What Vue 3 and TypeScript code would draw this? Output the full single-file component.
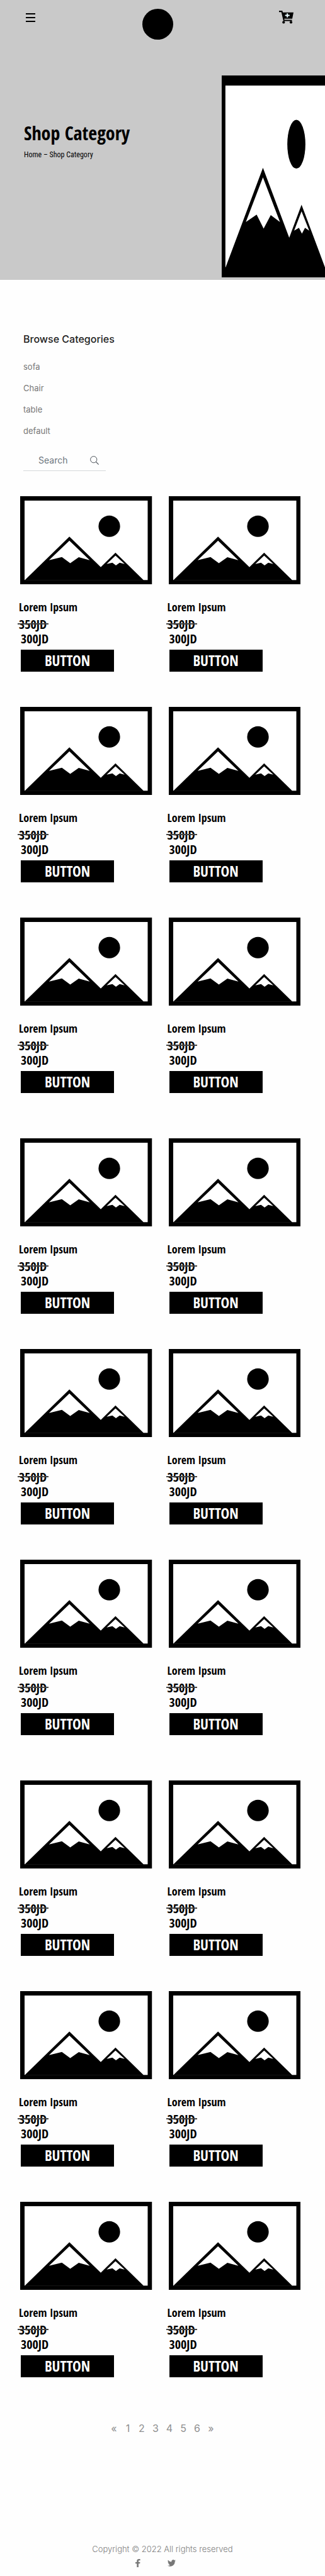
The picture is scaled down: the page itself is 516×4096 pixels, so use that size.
<script setup lang="ts">
import { ref } from 'vue'

interface Product {
  id: number
  name: string
  oldPrice: string
  price: string
}

const categories: string[] = ['sofa', 'Chair', 'table', 'default']
const pages: string[] = ['«', '1', '2', '3', '4', '5', '6', '»']
const query = ref('')

const groups: Product[][] = [0, 1, 2].map((g) =>
  Array.from({ length: 6 }, (_, i) => ({
    id: g * 6 + i,
    name: 'Lorem Ipsum',
    oldPrice: '350JD',
    price: '300JD',
  })),
)
</script>

<template>
  <div class="page">
    <svg class="defs" aria-hidden="true">
      <symbol id="landscape" viewBox="0 0 209 140" preserveAspectRatio="none">
        <rect width="209" height="140" fill="#000" />
        <rect x="7" y="7" width="195" height="126" fill="#fff" />
        <ellipse cx="141.2" cy="47.7" rx="17.1" ry="16.9" fill="#000" />
        <path
          d="M7 133.5 78 64l49.7 48.5L151 89.6l44.8 43.9z"
          fill="#000"
        />
        <path
          d="M78 70.6l32.2 31-17.4-4.8-13.5 9.4-13.2-9.7-20.4 5.1z"
          fill="#fff"
        />
        <path
          d="M151 94.2l14.5 13.4-7.9-2-5.9 4.1-5.6-4.1-9.1 2z"
          fill="#fff"
        />
      </symbol>
    </svg>

    <header class="hero">
      <nav class="bar">
        <button class="icon-btn menu" type="button" aria-label="Menu">
          <svg viewBox="0 0 15 14" width="15" height="14">
            <path d="M0 1h15M0 7h15M0 13h15" stroke="#000" stroke-width="2" />
          </svg>
        </button>
        <a class="logo" href="#" aria-label="Home"></a>
        <button class="icon-btn cart" type="button" aria-label="Cart">
          <svg viewBox="0 0 23 21" width="23" height="21">
            <path
              d="M0 0h5.3l.7 2.7h17l-2 10H8.3l.3 1.9h11.9v2H7L3.7 2.2H0z"
              fill="#000"
            />
            <circle cx="7.3" cy="18.4" r="2.1" fill="#000" />
            <circle cx="19" cy="18.4" r="2.1" fill="#000" />
            <path d="M13.2 4.2v6.6M9.6 7.5h7.2" stroke="#e9fbff" stroke-width="2" />
          </svg>
        </button>
      </nav>
      <div class="banner">
        <div class="intro">
          <h1>Shop Category</h1>
          <p>Home – Shop Category</p>
        </div>
        <svg class="banner-pic" role="img" aria-label="Banner">
          <use href="#landscape" width="100%" height="100%" />
        </svg>
      </div>
    </header>

    <aside class="browse">
      <h2>Browse Categories</h2>
      <ul>
        <li v-for="c in categories" :key="c"><a href="#">{{ c }}</a></li>
      </ul>
      <form class="search" @submit.prevent>
        <input v-model="query" type="text" placeholder="Search" aria-label="Search" />
        <button class="icon-btn" type="submit" aria-label="Submit search">
          <svg viewBox="0 0 14 14" width="14" height="14">
            <circle cx="5.7" cy="5.7" r="5.1" fill="none" stroke="#495057" />
            <path d="M9.4 9.4l4.2 4.2" stroke="#495057" stroke-width="1.2" />
          </svg>
        </button>
      </form>
    </aside>

    <main class="groups">
      <section v-for="(group, g) in groups" :key="g" class="grid">
        <article v-for="p in group" :key="p.id" class="card">
          <svg class="pic" viewBox="0 0 209 140" role="img" :aria-label="p.name">
            <use href="#landscape" width="209" height="140" />
          </svg>
          <h3>{{ p.name }}</h3>
          <div><del>{{ p.oldPrice }}</del></div>
          <div class="price">{{ p.price }}</div>
          <button class="buy" type="button">BUTTON</button>
        </article>
      </section>
    </main>

    <nav class="pages" aria-label="Pages">
      <a v-for="n in pages" :key="n" href="#">{{ n }}</a>
    </nav>

    <footer class="footer">
      <p>Copyright © 2022 All rights reserved</p>
      <div class="social">
        <a href="#" aria-label="Facebook">
          <svg viewBox="0 0 8 13" width="8" height="13">
            <path
              d="M2.3 13V7.2H0V5h2.3V3.3C2.3 1.1 3.6 0 5.6 0c.9 0 1.7.1 2 .1v2.1H6.2c-1.1 0-1.3.5-1.3 1.3V5h2.6l-.4 2.2H4.9V13z"
              fill="#777"
            />
          </svg>
        </a>
        <a href="#" aria-label="Twitter">
          <svg viewBox="0 0 24 20" width="13" height="11">
            <path
              d="M24 2.4a9.800 9.800 0 0 1-2.800.8A4.900 4.900 0 0 0 23.300.5a9.900 9.900 0 0 1-3.100 1.200 4.900 4.900 0 0 0-8.400 4.500A14 14 0 0 1 1.700 1a4.900 4.900 0 0 0 1.500 6.600A4.900 4.900 0 0 1 1 7v.1a4.900 4.900 0 0 0 3.900 4.800 5 5 0 0 1-2.200.1 4.900 4.900 0 0 0 4.600 3.400A9.900 9.900 0 0 1 0 17.500 14 14 0 0 0 21.500 5v-.2A10 10 0 0 0 24 2.400z"
              fill="#777"
            />
          </svg>
        </a>
      </div>
    </footer>
  </div>
</template>

<style>
body {
  margin: 0;
  background: #fefefe;
}
</style>

<style scoped>
.page {
  font-family: Inter, "Open Sans", sans-serif;
  color: #222;
}
h1,
h2,
h3,
p,
ul {
  margin: 0;
  padding: 0;
}
ul {
  list-style: none;
}
a {
  color: inherit;
  text-decoration: none;
}
svg {
  display: block;
}
.defs {
  position: absolute;
  width: 0;
  height: 0;
}
.icon-btn {
  padding: 0;
  border: 0;
  background: none;
}

.hero {
  overflow: hidden;
  background: #c9c9c9;
  color: #000;
}
.bar {
  display: flex;
  justify-content: space-between;
  align-items: flex-start;
  height: 106px;
  padding: 14px 50px 0 41px;
}
.menu {
  width: 17px;
  margin-top: 7px;
}
.cart {
  margin-top: 3px;
}
.logo {
  width: 49px;
  height: 49px;
  border-radius: 50%;
  background: #000;
}
.banner {
  display: flex;
  justify-content: space-between;
  padding-bottom: 4px;
}
.intro {
  padding: 71px 0 0 38px;
}
.intro h1 {
  font: bold 30px/42px "Open Sans Condensed", "Open Sans", sans-serif;
}
.intro p {
  margin-top: 3px;
  font: 12px/20px "Roboto Condensed", Roboto, sans-serif;
}
.banner-pic {
  width: 34%;
  height: 321px;
  margin-right: -11px;
}

.browse {
  padding: 82px 37px 0;
}
.browse h2 {
  font-size: 16px;
  font-weight: 500;
  line-height: 24px;
}
.browse ul {
  margin-top: 15px;
  color: #777;
  font-size: 13px;
  line-height: 34px;
}
.search {
  display: flex;
  align-items: center;
  width: 131px;
  height: 32px;
  margin-top: 14px;
  border-bottom: 1px solid #d5d8da;
}
.search input {
  flex: 1;
  min-width: 0;
  padding: 0 0 0 24px;
  border: 0;
  outline: 0;
  background: none;
  color: #6c757d;
  font: 14px/20px Inter, "Open Sans", sans-serif;
}
.search input::placeholder {
  color: #6c757d;
  opacity: 1;
}
.search button {
  margin-right: 11px;
}

.groups {
  display: grid;
  gap: 16px;
  margin-top: 40px;
}
.grid {
  display: grid;
  grid-template-columns: 1fr 1fr;
  grid-auto-rows: 335px;
  column-gap: 24px;
  padding: 0 39px 0 30px;
}
.card {
  color: #000;
  font: bold 20px/23px "Open Sans Condensed", "Open Sans", sans-serif;
}
.pic {
  box-sizing: border-box;
  width: 100%;
  height: auto;
  padding-left: 2px;
}
.card h3 {
  margin: 22px 0 2px;
  font-size: 18px;
  line-height: 28px;
}
.card del {
  position: relative;
  text-decoration: none;
}
.card del::after {
  content: "";
  position: absolute;
  left: -2px;
  right: -3px;
  top: 12px;
  height: 2px;
  background: #444;
}
.price {
  padding-left: 3px;
}
.buy {
  display: block;
  width: 70%;
  height: 35px;
  margin: 6px 0 0 3px;
  padding: 0 0 2px;
  border: 0;
  background: #000;
  color: #fff;
  font: bold 23px/30px "Open Sans Condensed", "Open Sans", sans-serif;
}

.pages {
  display: flex;
  justify-content: center;
  margin-top: 13px;
  color: #8f8f8f;
  font-size: 16px;
  line-height: 24px;
}
.pages a {
  min-width: 22px;
  text-align: center;
}

.footer {
  margin-top: 170px;
  padding-bottom: 14px;
  color: #808080;
  text-align: center;
}
.footer p {
  font-size: 13px;
  font-weight: 300;
  line-height: 20px;
}
.social {
  display: flex;
  align-items: center;
  justify-content: center;
  gap: 43px;
  margin-top: 6px;
  padding-right: 22px;
}
</style>
